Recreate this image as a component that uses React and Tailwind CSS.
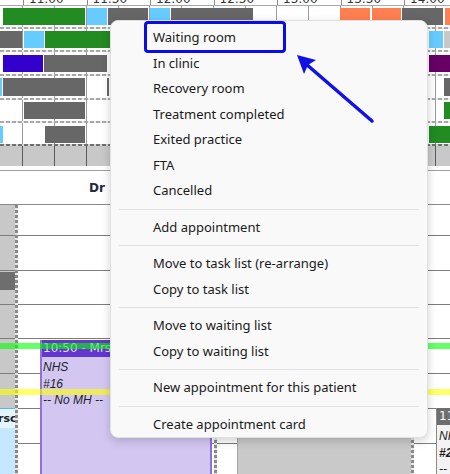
import React from 'react';

// bar colours on the timeline
const GREEN = 'bg-[#228b22]';
const SKY = 'bg-[#66ccff]';
const DARK = 'bg-[#676767]';
const VIOLET = 'bg-[#3300cc]';
const PLUM = 'bg-[#660066]';
const CORAL = 'bg-[#ff7f50]';
const LIGHT = 'bg-[#c8c8c8]';

const TIMES = ['10:30', '11:00', '11:30', '12:00', '12:30', '13:00', '13:30', '14:00', '14:30'];

const GRID = 'bg-[repeating-linear-gradient(to_right,transparent_0_22.5px,#9c9c9c_22.5px_23.5px,transparent_23.5px_31.75px)]';

const ROWS = [
  { cls: 'h-[21px] pt-[2px] pb-[2px]', bars: [[3, 85, GREEN], [87, 107, SKY], [108, 148, DARK], [150, 170, SKY], [171, 253, DARK], [340, 370, CORAL], [372, 401, CORAL], [402, 443, DARK], [445, 450, CORAL]] },
  { cls: 'h-[21px] pt-[2px] pb-[2px]', bars: [[0, 22, DARK], [24, 44, SKY], [45, 110, GREEN], [429, 443, SKY], [444, 450, LIGHT]] },
  { cls: 'h-[22px] pt-[3px] pb-[2px]', bars: [[3, 43, VIOLET], [44, 107, DARK], [429, 450, PLUM]] },
  { cls: 'h-[22px] pt-[2px] pb-[2px]', bars: [[0, 2, SKY], [3, 85, DARK], [107, 109, DARK], [444, 450, DARK]] },
  { cls: 'h-[21px] pt-[2px] pb-[2px]', bars: [[24, 85, DARK], [444, 450, GREEN]] },
  { cls: 'h-[21px] pt-[3px] pb-[1px]', bars: [[0, 3, SKY], [45, 85, DARK], [429, 450, GREEN]] },
];

const MENU = [
  ['Waiting room', 'In clinic', 'Recovery room', 'Treatment completed', 'Exited practice', 'FTA', 'Cancelled'],
  ['Add appointment'],
  ['Move to task list (re-arrange)', 'Copy to task list'],
  ['Move to waiting list', 'Copy to waiting list'],
  ['New appointment for this patient'],
  ['Create appointment card'],
];

const SLOT_HEIGHTS = ['h-[31px]', 'h-[35px]', 'h-[34px]', 'h-[34px]', 'h-[35px]', 'h-[35px]', 'h-[35px]', 'h-[35px]'];

function Bars({ bars }) {
  let x = 0;
  return bars.map(([a, b, c], i) => {
    const ml = a - x;
    x = b;
    return <div key={i} className={`h-full shrink-0 ${c}`} style={{ marginLeft: ml, width: b - a }} />;
  });
}

function Slots() {
  return SLOT_HEIGHTS.map((h, i) => <div key={i} className={`${h} shrink-0 border-b border-[#7c7c7c]`} />);
}

const Divider = () => (
  <div className="w-[3px] shrink-0 bg-[repeating-linear-gradient(to_bottom,#8a8a8a_0_3px,#e6e6e6_3px_5px)]" />
);

export default function App() {
  return (
    <div className="relative w-[450px] h-[474px] overflow-hidden bg-white font-['DejaVu_Sans',sans-serif]">
      {/* time header, mostly scrolled off */}
      <div className="h-[6px] overflow-hidden border-b border-[#a8a8a8]">
        <div className="flex ml-[-40.5px]">
          {TIMES.map((t) => (
            <div key={t} className="w-[63.5px] shrink-0 border-l border-[#8a8a8a] pl-[5px] -mt-[7px] text-[12px] leading-[12px] text-[#333]">
              {t}
            </div>
          ))}
        </div>
      </div>

      {/* overview rows */}
      {ROWS.map((r, i) => (
        <div key={i}>
          <div className={`${r.cls} flex ${GRID}`}>
            <Bars bars={r.bars} />
          </div>
          {i < ROWS.length - 1 ? (
            <div className="h-[2px] bg-[repeating-linear-gradient(to_right,#a8a8a8_0_4px,#ececec_4px_6px)]" />
          ) : (
            <div className="h-[2px] bg-[repeating-linear-gradient(to_right,#6f6f6f_0_4px,#d4d4d4_4px_6px)]" />
          )}
        </div>
      ))}
      <div className="h-[20px] bg-[#c8c8c8] bg-[repeating-linear-gradient(to_right,transparent_0_22.5px,#5a5a5a_22.5px_23.5px,transparent_23.5px_31.75px)]" />
      <div className="h-[4px]" />
      <div className="h-px bg-[#a0a0a0]" />

      {/* day view header */}
      <div className="h-[34px] border-b border-[#8a8a8a] flex items-center pl-[89px]">
        <span className="font-bold text-[12px] text-[#1f2a40]">Dr</span>
      </div>

      {/* day view body */}
      <div className="relative flex h-[300px]">
        <div className="relative w-[15px] shrink-0 flex flex-col bg-[#c8c8c8]">
          <Slots />
          <div className="absolute left-0 top-[67px] w-full h-[18px] bg-[#6e6e6e]" />
          <div className="absolute left-0 top-[203px] w-full h-[80px] border-t border-[#4db8ff] bg-[#c6e8ff] overflow-hidden">
            <div className="h-[19px] bg-[#e4f5ff] text-[11px] leading-[19px] font-bold text-[#222] -ml-[2px] whitespace-nowrap">rsc</div>
          </div>
        </div>
        <Divider />
        <div className="relative w-[196px] shrink-0 flex flex-col">
          <Slots />
          <div className="absolute left-[22px] top-[135px] w-[172px] h-[200px] border-x-2 border-[#8f70e0] bg-[#d3c7f2]">
            <div className="h-[17px] bg-[#6535d0] text-[#e6ddff] text-[12px] leading-[17px] pl-[1px] whitespace-nowrap">10:50 - Mrs Khan</div>
            <div className="pl-[1px] pt-[2px] text-[12px] leading-[16.5px] italic font-['Liberation_Sans',sans-serif] text-[#1e1e2a]">
              <div>NHS</div>
              <div>#16</div>
              <div>-- No MH --</div>
            </div>
          </div>
        </div>
        <Divider />
        <div className="relative w-[194px] shrink-0 flex flex-col">
          <Slots />
          <div className="absolute left-[20px] top-[135px] w-[174px] bottom-0 border-l border-[#a6a6a6] bg-[#c9c9c9]" />
        </div>
        <Divider />
        <div className="relative flex-1 flex flex-col">
          <Slots />
          <div className="absolute left-[22px] top-[203px] w-[60px] h-[100px] border-l border-[#8a8a8a] bg-[#f3f3f3] overflow-hidden">
            <div className="h-[17px] bg-[#6e6e6e] text-white text-[12px] leading-[17px] pl-[2px] whitespace-nowrap">11:30 - Mr</div>
            <div className="pl-[2px] pt-[3px] text-[12px] leading-[16.5px] italic font-['Liberation_Sans',sans-serif] text-[#1e1e1e]">
              <div>NHS</div>
              <div className="font-bold">#21</div>
              <div>-- No MH --</div>
            </div>
          </div>
        </div>

        {/* now / marker lines */}
        <div className="absolute left-0 right-0 top-[138px] h-[6px] bg-[#00ff00] opacity-60" />
        <div className="absolute left-0 right-0 top-[184px] h-[6px] bg-[#ffff00] opacity-60" />
      </div>

      {/* context menu */}
      <div className="absolute left-[110px] top-[20px] w-[318px] h-[418px] rounded-[8px] border border-[#e0e0e0] bg-[#f9f9f9] pt-[4px] shadow-[0_3px_10px_rgba(0,0,0,0.18)] font-['Noto_Sans',sans-serif] text-[13px] text-[#1a1a1a]">
        {MENU.map((group, gi) => (
          <div key={gi}>
            {gi > 0 && (
              <div className="h-[11px] flex items-center px-[8px]">
                <div className="h-px w-full bg-[#e2e2e2]" />
              </div>
            )}
            {group.map((item) => (
              <div key={item} className="h-[25.5px] flex items-center pl-[42px]">
                {item}
              </div>
            ))}
          </div>
        ))}
        <div className="absolute left-[33px] top-0 w-[142px] h-[32px] rounded-[4px] border-[3px] border-[#0c0ce6]" />
      </div>

      {/* annotation arrow */}
      <svg className="absolute left-0 top-0 pointer-events-none" width="450" height="474" viewBox="0 0 450 474">
        <line x1="372" y1="121" x2="306" y2="64" stroke="#1111e6" strokeWidth="3.5" strokeLinecap="round" />
        <polygon points="297,55 316,60 308,65 304,74" fill="#1111e6" />
      </svg>
    </div>
  );
}
